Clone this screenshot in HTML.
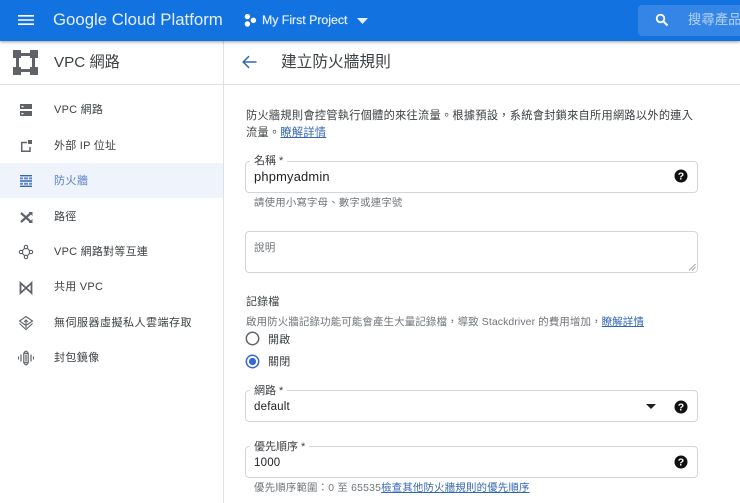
<!DOCTYPE html>
<html><head><meta charset="utf-8"><style>
html,body{margin:0;padding:0;background:#fff}
body{width:740px;height:503px;overflow:hidden;position:relative;font-family:"Liberation Sans","Noto Sans CJK TC",sans-serif;color:#3c4043}
.a{position:absolute;white-space:nowrap}
.nav{left:54px;font-size:11px;line-height:14px;letter-spacing:.25px;color:#3c4043}
.ic{position:absolute;left:18px;width:16px;height:16px}
.box{position:absolute;left:245px;width:453px;border:1px solid #d4d5d7;border-radius:4px;box-sizing:border-box;background:#fff}
.lab{position:absolute;left:250px;background:#fff;padding:0 4px;font-size:11px;line-height:12px;color:#3c4043}
.val{position:absolute;left:254px;font-size:12.5px;line-height:16px;color:#202124;letter-spacing:.2px}
.hint{position:absolute;left:254px;font-size:10.4px;line-height:14px;color:#70757a;white-space:nowrap;letter-spacing:.22px}
.t{font-size:11.2px;line-height:16px;letter-spacing:.28px}
a{color:#3367b5;text-decoration:underline}
.q{position:absolute;left:674px;width:14px;height:14px}
</style></head><body>

<div class="a" style="left:0;top:0;width:740px;height:41px;background:#1272e0;box-shadow:0 1px 3px rgba(0,0,0,.4);z-index:3"></div>
<div style="position:absolute;z-index:4;left:0;top:0;width:740px;height:41px">
<svg class="a" style="left:18px;top:14px" width="16" height="12"><path d="M0 1h16v1.6H0zM0 5.2h16v1.6H0zM0 9.4h16v1.6H0z" fill="#fff"/></svg>
<div class="a" style="left:53px;top:9px;font-size:16.8px;line-height:22px;color:#e6f0fc">Google Cloud Platform</div>
<svg class="a" style="left:243px;top:14px" width="14" height="14"><circle cx="4.4" cy="2.6" r="2.7" fill="#fff"/><circle cx="4.4" cy="10" r="2.7" fill="#fff"/><circle cx="10.4" cy="6.3" r="2.7" fill="#fff"/></svg>
<div class="a" style="left:262px;top:13px;font-size:12.3px;line-height:15px;color:#e6f0fc;font-weight:400;-webkit-text-stroke:.2px #e6f0fc">My First Project</div>
<svg class="a" style="left:357px;top:18px" width="11" height="6"><path d="M0 0h11L5.5 6z" fill="#e6f0fc"/></svg>
<div class="a" style="left:638px;top:5px;width:102px;height:31px;background:#3485e6;border-radius:4px 0 0 4px"></div>
<svg class="a" style="left:655px;top:13px" width="14" height="14" viewBox="0 0 14 14"><circle cx="5.5" cy="5.5" r="3.8" fill="none" stroke="#fff" stroke-width="1.8"/><path d="M8.5 8.5L12.5 12.5" stroke="#fff" stroke-width="2"/></svg>
<div class="a" style="left:688px;top:11px;font-size:13.4px;line-height:17px;color:#b5d2f5">搜尋產品</div>
</div>

<div class="a" style="left:223px;top:41px;width:1px;height:462px;background:#dfe0e2"></div>
<div class="a" style="left:0;top:84px;width:740px;height:1px;background:#e0e1e3"></div>

<svg class="a" style="left:13px;top:50px" width="25" height="25" viewBox="0 0 25 25"><g fill="#5f6368"><rect width="8" height="8"/><rect x="17" width="8" height="8"/><rect y="17" width="8" height="8"/><rect x="17" y="17" width="8" height="8"/><rect x="8" y="3" width="9" height="3"/><rect x="8" y="19" width="9" height="3"/><rect x="3" y="8" width="3" height="9"/><rect x="19" y="8" width="3" height="9"/></g></svg>
<div class="a" style="left:54px;top:53px;font-size:15.2px;line-height:20px;color:#3c4043">VPC 網路</div>

<svg class="a" style="left:241px;top:54px" width="16" height="16" viewBox="0 0 16 16"><path d="M15.5 8H2.2M8 2.2L2.2 8 8 13.8" fill="none" stroke="#3367b5" stroke-width="1.5"/></svg>
<div class="a" style="left:281px;top:53px;font-size:15.7px;line-height:20px;color:#3c4043">建立防火牆規則</div>

<div class="a" style="left:0;top:163px;width:223px;height:35px;background:#eef3fc"></div>

<svg class="ic" style="top:102px" viewBox="0 0 16 16"><path d="M2 2h12v5H2zM2 9h12v5H2z" fill="#5f6368"/><path d="M3.5 4h2v1.3h-2zM3.5 11h2v1.3h-2z" fill="#fff"/></svg>
<div class="a nav" style="top:103px">VPC 網路</div>
<svg class="ic" style="top:138px" viewBox="0 0 16 16"><path d="M3 4.5h6M3.7 4v9.300h8.300V9" fill="none" stroke="#5f6368" stroke-width="1.5"/><rect x="10" y="2" width="4" height="4" fill="#5f6368"/></svg>
<div class="a nav" style="top:139px">外部 IP 位址</div>
<svg class="ic" style="top:173px" viewBox="0 0 16 16"><g fill="#2f67b5"><path d="M2 2h12v1.400H2zM2 7.300h12v1.400H2zM2 12.600h12V14H2z"/><path d="M2 4.400h3v2H2zM6 4.400h4v2H6zM11 4.400h3v2h-3zM2 9.700h3v2H2zM6 9.700h4v2H6zM11 9.700h3v2h-3z" opacity=".75"/></g></svg>
<div class="a nav" style="top:174px;color:#5a80c4;letter-spacing:.5px">防火牆</div>
<svg class="ic" style="top:209px" viewBox="0 0 16 16"><path d="M3 4l10 9M13 4L3 13" fill="none" stroke="#5f6368" stroke-width="2.2"/><path d="M10.500 3h4v4zM10.500 14h4v-4z" fill="#5f6368"/></svg>
<div class="a nav" style="top:210px">路徑</div>
<svg class="ic" style="top:244px" viewBox="0 0 16 16"><g fill="none" stroke="#5f6368" stroke-width="1.1"><circle cx="8" cy="3" r="1.700"/><circle cx="3" cy="8" r="1.700"/><circle cx="13" cy="8" r="1.700"/><circle cx="8" cy="13" r="1.700"/><path d="M6.800 4.200L4.200 6.800M9.200 4.200l2.600 2.600M4.200 9.200l2.600 2.600M11.800 9.200l-2.600 2.600"/></g></svg>
<div class="a nav" style="top:245px">VPC 網路對等互連</div>
<svg class="ic" style="top:280px" viewBox="0 0 16 16"><path d="M2.500 3v10L8 8zM13.500 3v10L8 8z" fill="none" stroke="#5f6368" stroke-width="1.800"/></svg>
<div class="a nav" style="top:280px">共用 VPC</div>
<svg class="ic" style="top:315px" viewBox="0 0 16 16"><g fill="none" stroke="#5f6368" stroke-width="1.100"><path d="M8 1.500L14.500 6 8 10.500 1.500 6z"/><path d="M1.500 8.500L8 14.500 14.500 8.500"/><path d="M8 5v8M6 7l2-2 2 2"/></g></svg>
<div class="a nav" style="top:316px;letter-spacing:.5px">無伺服器虛擬私人雲端存取</div>
<svg class="ic" style="top:350px" viewBox="0 0 16 16"><g fill="none" stroke="#5f6368" stroke-width="1.200"><path d="M.5 6.500v3M3 4.500v7M13 4.500v7M15.500 6.500v3M5.800 2.500v11M10.200 2.500v11"/><circle cx="8" cy="2.500" r="1.300"/><circle cx="8" cy="13.500" r="1.300"/><path d="M8 5v6"/></g></svg>
<div class="a nav" style="top:351px;letter-spacing:.4px">封包鏡像</div>

<div class="a t" style="left:246px;top:108px;color:#3c4043">防火牆規則會控管執行個體的來往流量。根據預設，系統會封鎖來自所用網路以外的連入</div>
<div class="a t" style="left:246px;top:125px;color:#3c4043">流量。<a href="#">瞭解詳情</a></div>

<div class="box" style="top:161px;height:32px"></div>
<div class="lab" style="top:155px">名稱 *</div>
<div class="val" style="top:169px;font-size:12.9px">phpmyadmin</div>
<svg class="q" style="top:169px" viewBox="0 0 14 14"><circle cx="7" cy="7" r="6.500" fill="#111"/><text x="7" y="10.600" font-family="Liberation Sans" font-weight="700" font-size="10.500" fill="#fff" text-anchor="middle">?</text></svg>
<div class="hint" style="top:197px">請使用小寫字母、數字或連字號</div>

<div class="box" style="top:231px;height:42px"></div>
<div class="a" style="left:254px;top:241px;font-size:10.600px;line-height:14px;color:#70757a;letter-spacing:.2px">說明</div>
<svg class="a" style="left:688px;top:263px" width="8" height="8"><path d="M1 7.500L7.500 1M4 7.500L7.500 4" stroke="#8a8a8a" stroke-width=".8"/></svg>

<div class="a" style="left:246px;top:295px;font-size:11px;line-height:14px;color:#3c4043;letter-spacing:.1px">記錄檔</div>
<div class="hint" style="left:246px;top:315px;font-size:10.500px;letter-spacing:.08px">啟用防火牆記錄功能可能會產生大量記錄檔，導致 Stackdriver 的費用增加，<a href="#">瞭解詳情</a></div>

<svg class="a" style="left:245px;top:331px" width="15" height="15"><circle cx="7.500" cy="7.500" r="6.200" fill="none" stroke="#5f6368" stroke-width="1.500"/></svg>
<div class="a" style="left:268px;top:333px;font-size:11px;line-height:14px;color:#3c4043;letter-spacing:.2px">開啟</div>
<svg class="a" style="left:245px;top:354px" width="15" height="15"><circle cx="7.500" cy="7.500" r="6.200" fill="none" stroke="#3367d6" stroke-width="1.500"/><circle cx="7.500" cy="7.500" r="3.600" fill="#3367d6"/></svg>
<div class="a" style="left:268px;top:355px;font-size:11px;line-height:14px;color:#3c4043;letter-spacing:.2px">關閉</div>

<div class="box" style="top:390px;height:32px"></div>
<div class="lab" style="top:385px">網路 *</div>
<div class="val" style="top:399px;font-size:11.500px">default</div>
<svg class="a" style="left:646px;top:404px" width="10" height="5"><path d="M0 0h10L5 5z" fill="#202124"/></svg>
<svg class="q" style="top:400px" viewBox="0 0 14 14"><circle cx="7" cy="7" r="6.500" fill="#111"/><text x="7" y="10.600" font-family="Liberation Sans" font-weight="700" font-size="10.500" fill="#fff" text-anchor="middle">?</text></svg>

<div class="box" style="top:446px;height:32px"></div>
<div class="lab" style="top:441px">優先順序 *</div>
<div class="val" style="top:455px;font-size:11.500px">1000</div>
<svg class="q" style="top:455px" viewBox="0 0 14 14"><circle cx="7" cy="7" r="6.500" fill="#111"/><text x="7" y="10.600" font-family="Liberation Sans" font-weight="700" font-size="10.500" fill="#fff" text-anchor="middle">?</text></svg>
<div class="hint" style="top:482px">優先順序範圍：0 至 65535<a href="#">檢查其他防火牆規則的優先順序</a></div>

</body></html>
